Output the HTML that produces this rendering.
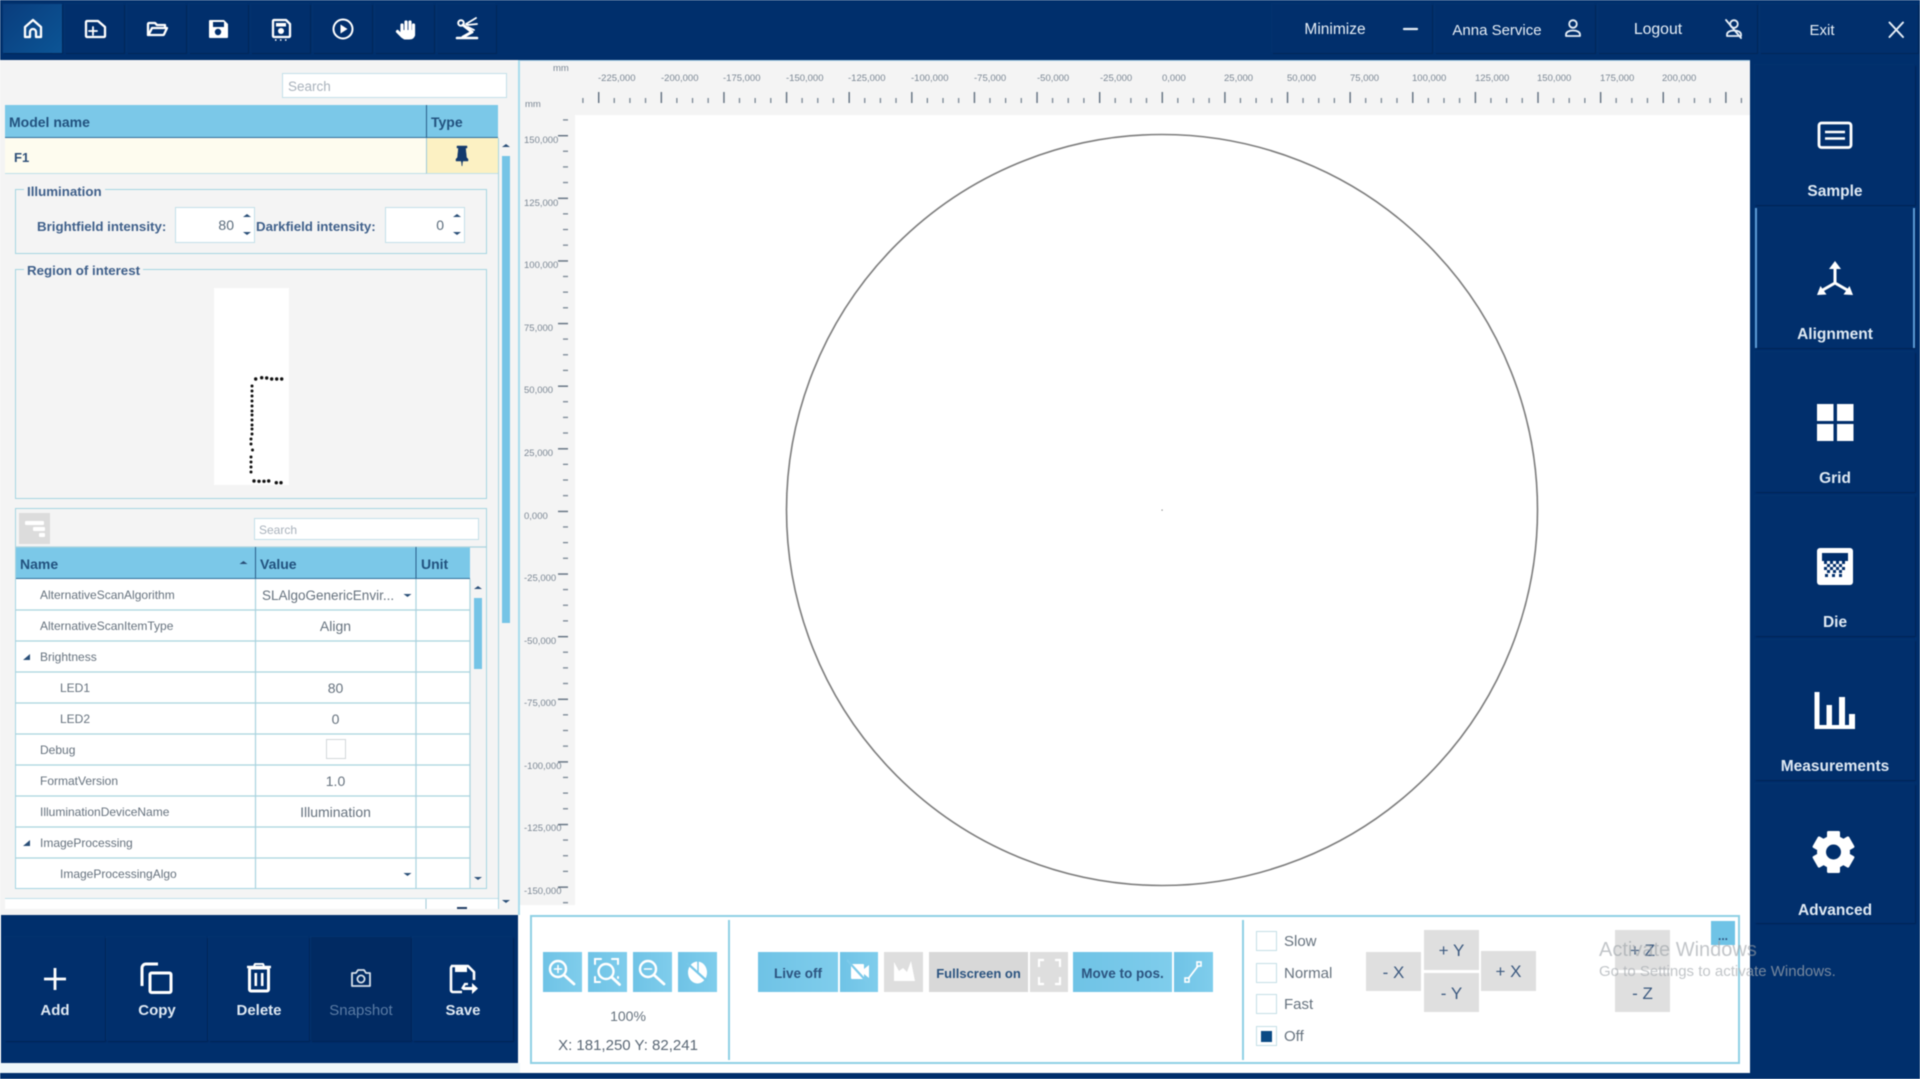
<!DOCTYPE html>
<html><head><meta charset="utf-8"><title>Alignment</title>
<style>
html,body{margin:0;padding:0;width:1920px;height:1079px;overflow:hidden;background:#fff}
#p{position:absolute;left:0;top:0;width:1920px;height:1079px;overflow:hidden;font-family:"Liberation Sans",sans-serif;background:#fff;filter:blur(.45px)}
#p div{position:absolute;box-sizing:border-box}
.t{white-space:nowrap}
.c{display:flex;align-items:center;justify-content:center;white-space:nowrap}
.nav{background:#002f6c}
.tb{background:#012f6c;box-shadow:1px 1px 0 #012658,-1px -1px 0 #03336f;top:4px;height:49px}
.tt{color:#e6eef6;font-size:15px;font-weight:400;height:24px;top:18px}
.sb{background:#012f6c;left:1755px;width:160px;box-shadow:1px 1px 1px #012354,-1px -1px 0 #03336f;color:#dfe9f3;font-size:15.5px;font-weight:700}
.sb span{position:absolute;left:0;width:160px;text-align:center;line-height:20px}
.lb{background:#012f6c;top:937px;height:104px;width:100px;box-shadow:1px 1px 1px #012354,-1px -1px 0 #03336f}
.lbt{top:1000px;height:20px;width:100px;color:#dfe9f3;font-size:15px;font-weight:700}
.r{color:#7b8794;font-size:9.5px;line-height:12px;white-space:nowrap}
.l{color:#7b8794;font-size:9.5px;line-height:12px;left:524px;white-space:nowrap}
.inp{background:#fff;border:1.5px solid #c3e0e8;color:#a9b2bc;font-size:13.5px;padding-left:5px;padding-top:2px;display:flex;align-items:center}
.lg{color:#3e5f8a;font-size:13.3px;font-weight:700;white-space:nowrap;background:#f4f4f4;padding:0 3px;line-height:16px}
.grp{border:1.5px solid #a6d5e2}
.lab{color:#3e5f8a;font-size:13.3px;font-weight:700;white-space:nowrap;line-height:18px}
.num{background:#fff;border:1.5px solid #c3e0e8;color:#5a6b7b;font-size:14px;text-align:right;line-height:35px}
.h{color:#22527f;font-size:14px;font-weight:700;white-space:nowrap;line-height:18px}
.n{color:#66727e;font-size:12px;line-height:33px;white-space:nowrap}
.v{color:#66727e;font-size:14px;left:256px;width:159px;text-align:center;line-height:33px;white-space:nowrap}
.bb{background:linear-gradient(90deg,#6fc3e6,#7fcdec);top:952px;height:40px}
.gb{background:#dedede;top:952px;height:40px}
.bt{color:#2c5480;font-size:13.5px;font-weight:700;padding-top:2px}
.chk{left:1256px;width:21px;height:20px;background:#fff;border:1.5px solid #c4dfe6}
.cl{left:1284px;color:#66727e;font-size:15px;line-height:22px;white-space:nowrap}
.mv{background:#dfdfdf;color:#3c5a80;font-size:17px;width:55px;padding-top:2px}
</style></head><body><div id="p">

<!-- base areas -->
<div class="nav" style="left:0;top:0;width:1920px;height:60px"></div>
<div style="left:0;top:60px;width:519px;height:855px;background:#f4f4f4"></div>
<div style="left:518px;top:60px;width:2px;height:855px;background:#a9dcec"></div>
<div style="left:520px;top:60px;width:1230px;height:55px;background:#f4f4f4;border-top:1px solid #a9cfe6"></div>
<div style="left:520px;top:115px;width:55px;height:790px;background:#f4f4f4"></div>
<div class="nav" style="left:1750px;top:60px;width:170px;height:1019px"></div>
<div class="nav" style="left:0;top:1073px;width:1920px;height:6px"></div>
<div class="nav" style="left:1px;top:915px;width:517px;height:148px"></div>
<div style="left:0;top:1063px;width:520px;height:10px;background:#eef7fa"></div>

<!-- top buttons -->
<div class="tb" style="left:3px;width:59px;background:linear-gradient(135deg,#0a3d7d,#0c5596 100%)"></div>
<div class="tb" style="left:65px;width:59px"></div>
<div class="tb" style="left:127px;width:59px"></div>
<div class="tb" style="left:189px;width:59px"></div>
<div class="tb" style="left:251px;width:59px"></div>
<div class="tb" style="left:313px;width:59px"></div>
<div class="tb" style="left:375px;width:59px"></div>
<div class="tb" style="left:437px;width:59px"></div>
<div class="tb" style="left:1272px;width:160px"></div>
<div class="tb" style="left:1435px;width:160px"></div>
<div class="tb" style="left:1598px;width:159px"></div>
<div class="tb" style="left:1760px;width:158px"></div>
<div class="tt c" style="left:1300px;width:70px;font-size:15.5px">Minimize</div>
<div class="tt c" style="left:1447px;width:100px">Anna Service</div>
<div class="tt c" style="left:1618px;width:80px;font-size:15.8px">Logout</div>
<div class="tt c" style="left:1792px;width:60px">Exit</div>

<!-- right sidebar -->
<div class="sb" style="top:65px;height:140px"><span style="top:117px">Sample</span></div>
<div class="sb" style="top:208px;height:140px;border-left:2px solid #5c9bd6;border-right:2px solid #5c9bd6"><span style="top:117px;left:-2px">Alignment</span></div>
<div class="sb" style="top:352px;height:140px"><span style="top:117px">Grid</span></div>
<div class="sb" style="top:496px;height:140px"><span style="top:117px">Die</span></div>
<div class="sb" style="top:640px;height:140px"><span style="top:117px">Measurements</span></div>
<div class="sb" style="top:784px;height:139px"><span style="top:117px">Advanced</span></div>

<!-- left panel: model table -->
<div class="inp" style="left:282px;top:73px;width:225px;height:25px">Search</div>
<div style="left:5px;top:105px;width:493px;height:33px;background:#7bc8e8;border-bottom:1.5px solid #2f6f9c"></div>
<div style="left:426px;top:105px;width:1px;height:33px;background:#2b5f8c"></div>
<div class="h" style="left:9px;top:113px">Model name</div>
<div class="h" style="left:431px;top:113px">Type</div>
<div style="left:5px;top:138px;width:421px;height:36px;background:#fefcef;border-bottom:1px solid #bfe0e8"></div>
<div style="left:426px;top:138px;width:72px;height:36px;background:#fcf1c3;border-bottom:1px solid #bfe0e8;border-left:1px solid #9fc9d6"></div>
<div class="t" style="left:14px;top:150px;color:#2e4f78;font-size:13px;font-weight:700;line-height:16px">F1</div>

<!-- scrollbar -->
<div style="left:498px;top:138px;width:1px;height:771px;background:#a9d5e2"></div>
<div style="left:502px;top:156px;width:8px;height:467px;background:#75c4e6"></div>

<!-- illumination -->
<div class="grp" style="left:15px;top:189px;width:472px;height:65px"></div>
<div class="lg" style="left:24px;top:184px">Illumination</div>
<div class="lab" style="left:37px;top:218px">Brightfield intensity:</div>
<div class="num" style="left:175px;top:207px;width:80px;height:36px;padding-right:20px">80</div>
<div class="lab" style="left:256px;top:218px">Darkfield intensity:</div>
<div class="num" style="left:385px;top:207px;width:80px;height:36px;padding-right:20px">0</div>

<!-- ROI -->
<div class="grp" style="left:15px;top:269px;width:472px;height:230px"></div>
<div class="lg" style="left:24px;top:263px">Region of interest</div>
<div style="left:214px;top:288px;width:75px;height:197px;background:#fff"></div>

<!-- property grid -->
<div class="grp" style="left:15px;top:508px;width:472px;height:381px"></div>
<div style="left:19px;top:513px;width:31px;height:31px;background:#dcdcdc"></div>
<div class="inp" style="left:254px;top:518px;width:225px;height:22px;font-size:12px;padding-left:4px">Search</div>
<div style="left:16px;top:547px;width:454px;height:32px;background:#7bc8e8;border-bottom:1.5px solid #2f6f9c"></div>
<div style="left:16px;top:579px;width:454px;height:309px;background:#fff"></div>
<div class="h" style="left:20px;top:555px">Name</div>
<div class="h" style="left:260px;top:555px">Value</div>
<div class="h" style="left:421px;top:555px">Unit</div>
<div class="n" style="left:40px;top:579px">AlternativeScanAlgorithm</div>
<div class="n" style="left:40px;top:610px">AlternativeScanItemType</div>
<div class="n" style="left:40px;top:641px">Brightness</div>
<div class="n" style="left:60px;top:672px">LED1</div>
<div class="n" style="left:60px;top:703px">LED2</div>
<div class="n" style="left:40px;top:734px">Debug</div>
<div class="n" style="left:40px;top:765px">FormatVersion</div>
<div class="n" style="left:40px;top:796px">IlluminationDeviceName</div>
<div class="n" style="left:40px;top:827px">ImageProcessing</div>
<div class="n" style="left:60px;top:858px">ImageProcessingAlgo</div>
<div class="t" style="left:262px;top:579px;color:#66727e;font-size:13.5px;line-height:33px">SLAlgoGenericEnvir...</div>
<div class="v" style="top:610px">Align</div>
<div class="v" style="top:672px">80</div>
<div class="v" style="top:703px">0</div>
<div class="v" style="top:765px">1.0</div>
<div class="v" style="top:796px">Illumination</div>
<div style="left:326px;top:739px;width:20px;height:20px;background:#fff;border:1.5px solid #d2d8da"></div>
<div style="left:474px;top:598px;width:8px;height:71px;background:#75c4e6"></div>

<!-- bottom left buttons -->
<div class="lb" style="left:5px"></div>
<div class="lb" style="left:107px"></div>
<div class="lb" style="left:209px"></div>
<div class="lb" style="left:311px;background:#012a62"></div>
<div class="lb" style="left:413px"></div>
<div class="lbt c" style="left:5px">Add</div>
<div class="lbt c" style="left:107px">Copy</div>
<div class="lbt c" style="left:209px">Delete</div>
<div class="lbt c" style="left:311px;color:#5a7ba4;font-weight:400">Snapshot</div>
<div class="lbt c" style="left:413px">Save</div>

<!-- ruler labels top -->
<div class="r" style="left:598px;top:73px">-225,000</div>
<div class="r" style="left:661px;top:73px">-200,000</div>
<div class="r" style="left:723px;top:73px">-175,000</div>
<div class="r" style="left:786px;top:73px">-150,000</div>
<div class="r" style="left:848px;top:73px">-125,000</div>
<div class="r" style="left:911px;top:73px">-100,000</div>
<div class="r" style="left:974px;top:73px">-75,000</div>
<div class="r" style="left:1037px;top:73px">-50,000</div>
<div class="r" style="left:1100px;top:73px">-25,000</div>
<div class="r" style="left:1162px;top:73px">0,000</div>
<div class="r" style="left:1224px;top:73px">25,000</div>
<div class="r" style="left:1287px;top:73px">50,000</div>
<div class="r" style="left:1350px;top:73px">75,000</div>
<div class="r" style="left:1412px;top:73px">100,000</div>
<div class="r" style="left:1475px;top:73px">125,000</div>
<div class="r" style="left:1537px;top:73px">150,000</div>
<div class="r" style="left:1600px;top:73px">175,000</div>
<div class="r" style="left:1662px;top:73px">200,000</div>
<div class="r" style="left:553px;top:63px">mm</div>
<div class="r" style="left:525px;top:99px">mm</div>
<!-- ruler labels left -->
<div class="l" style="top:135px">150,000</div>
<div class="l" style="top:198px">125,000</div>
<div class="l" style="top:260px">100,000</div>
<div class="l" style="top:323px">75,000</div>
<div class="l" style="top:385px">50,000</div>
<div class="l" style="top:448px">25,000</div>
<div class="l" style="top:511px">0,000</div>
<div class="l" style="top:573px">-25,000</div>
<div class="l" style="top:636px">-50,000</div>
<div class="l" style="top:698px">-75,000</div>
<div class="l" style="top:761px">-100,000</div>
<div class="l" style="top:823px">-125,000</div>
<div class="l" style="top:886px">-150,000</div>

<!-- bottom toolbar -->
<div style="left:530px;top:915px;width:1210px;height:149px;border:2px solid #8fd0e4"></div>
<div style="left:728px;top:920px;width:2px;height:140px;background:#8fd0e4"></div>
<div style="left:1242px;top:920px;width:2px;height:140px;background:#8fd0e4"></div>
<div class="bb" style="left:543px;width:39px"></div>
<div class="bb" style="left:588px;width:39px"></div>
<div class="bb" style="left:633px;width:39px"></div>
<div class="bb" style="left:678px;width:39px"></div>
<div class="c" style="left:578px;top:1006px;width:100px;height:20px;color:#66727e;font-size:14px">100%</div>
<div class="c" style="left:548px;top:1035px;width:160px;height:20px;color:#5a6775;font-size:15px">X: 181,250 Y: 82,241</div>
<div class="bb bt c" style="left:758px;width:80px">Live off</div>
<div class="bb" style="left:840px;width:38px"></div>
<div class="gb" style="left:884px;width:39px"></div>
<div class="gb bt c" style="left:929px;width:99px;background:#d8d8d8;font-size:13px">Fullscreen on</div>
<div class="gb" style="left:1030px;width:38px"></div>
<div class="bb bt c" style="left:1073px;width:99px">Move to pos.</div>
<div class="bb" style="left:1174px;width:39px"></div>

<div class="chk" style="top:931px"></div><div class="cl" style="top:931px">Slow</div>
<div class="chk" style="top:963px"></div><div class="cl" style="top:963px">Normal</div>
<div class="chk" style="top:994px"></div><div class="cl" style="top:994px">Fast</div>
<div class="chk" style="top:1026px"></div><div class="cl" style="top:1026px">Off</div>
<div style="left:1261px;top:1031px;width:11px;height:11px;background:#0a4a85"></div>

<div class="mv c" style="left:1366px;top:952px;height:39px">- X</div>
<div class="mv c" style="left:1424px;top:930px;height:40px">+ Y</div>
<div class="mv c" style="left:1424px;top:973px;height:39px">- Y</div>
<div class="mv c" style="left:1481px;top:951px;height:40px">+ X</div>
<div class="mv c" style="left:1615px;top:930px;height:40px">+ Z</div>
<div class="mv c" style="left:1615px;top:973px;height:39px">- Z</div>
<div class="c" style="left:1711px;top:921px;width:24px;height:24px;background:#6fc3e6;color:#2c5480;font-size:12px;font-weight:700;padding-top:6px">...</div>

<!-- drawings -->
<svg style="position:absolute;left:0;top:0" width="1920" height="1079" viewBox="0 0 1920 1079" fill="none">
<defs>
<pattern id="tt" patternUnits="userSpaceOnUse" x="598" y="0" width="62.62" height="1079">
<rect x="0" y="92" width="1.4" height="11" fill="#5f6e7e"/>
<rect x="15.65" y="98" width="1.2" height="5" fill="#6f7d8c"/>
<rect x="31.3" y="98" width="1.2" height="5" fill="#6f7d8c"/>
<rect x="46.95" y="98" width="1.2" height="5" fill="#6f7d8c"/>
</pattern>
<pattern id="lt" patternUnits="userSpaceOnUse" x="0" y="135" width="1920" height="62.62">
<rect x="558" y="0" width="10" height="1.4" fill="#5f6e7e"/>
<rect x="563" y="15.65" width="5" height="1.2" fill="#6f7d8c"/>
<rect x="563" y="31.3" width="5" height="1.2" fill="#6f7d8c"/>
<rect x="563" y="46.95" width="5" height="1.2" fill="#6f7d8c"/>
</pattern>
</defs>
<rect x="581" y="90" width="1163" height="15" fill="url(#tt)"/>
<rect x="556" y="117" width="14" height="787" fill="url(#lt)"/>

<!-- wafer -->
<circle cx="1162" cy="510" r="375.5" stroke="#7d7d7d" stroke-width="1.6"/>
<rect x="1161.5" y="509.5" width="1.2" height="1.2" fill="#888"/>

<!-- top icons -->
<g stroke="#fff" stroke-width="2.3" stroke-linejoin="round" stroke-linecap="round">
<path d="M25 27 33 20 41 27V37H36V32a3 3 0 0 0-6 0V37H25Z"/>
<path d="M87 21h11l7 6v9a1 1 0 0 1-1 1H87a1 1 0 0 1-1-1V22a1 1 0 0 1 1-1Z"/>
<path d="M93 27v8M89 31h8" stroke-width="1.8"/>
<path d="M148 35V24a1 1 0 0 1 1-1h6l2 2h8v3"/>
<path d="M148 35h15a1 1 0 0 0 1-.6L167 28H152L148.5 35Z"/>
<path d="M274 20h12l4 4v12a1 1 0 0 1-1 1H274a1 1 0 0 1-1-1V21a1 1 0 0 1 1-1Z"/>
<circle cx="343" cy="29" r="9.5" stroke-width="2"/>
</g>
<g transform="translate(-1 0)">
<path d="M211 20h14l4 4v13a1 1 0 0 1-1 1H211a1 1 0 0 1-1-1V21a1 1 0 0 1 1-1Z" fill="#fff"/>
<rect x="214" y="22" width="11" height="5" fill="#012f6c"/>
<circle cx="219" cy="32" r="3.2" fill="#012f6c"/>
</g>
<rect x="276" y="23" width="10" height="3.5" fill="#fff"/>
<circle cx="281" cy="31" r="3" fill="#fff"/>
<path d="M275 40h1.5M280 40h1.5M285 40h1.5" stroke="#fff" stroke-width="1.5"/>
<path d="M340.5 24.5v9l7-4.5Z" fill="#fff"/>
<!-- hand -->
<g stroke="#fff" stroke-width="3.2" stroke-linecap="round">
<path d="M402 25v10M406 22v12M410 22v12M413.5 25v10M397.5 31.5l5 5"/>
</g>
<path d="M401 30h14v4c0 4-2.5 5.5-6 5.5h-3.5c-2 0-3-1-4.5-3Z" fill="#fff"/>
<!-- robot -->
<g stroke="#fff" stroke-width="2.6" stroke-linecap="round" stroke-linejoin="round">
<path d="M457 38h20"/>
<path d="M463 37l9-5-9-7" stroke-width="3"/>
<circle cx="461" cy="23" r="2.8" stroke-width="2"/>
<path d="M466 24l10-6M467 25l10-1M468 27l6 3" stroke-width="1.8"/>
</g>

<!-- top right icons -->
<g stroke="#e6eef6" stroke-linecap="round">
<path d="M1404 29h13" stroke-width="2.2"/>
<circle cx="1573" cy="24" r="3.8" stroke-width="1.8"/>
<path d="M1566 36v-1.500c0-2.500 3-4 7-4s7 1.500 7 4V36Z" stroke-width="1.8" stroke-linejoin="round"/>
<circle cx="1734" cy="24" r="3.8" stroke-width="1.8"/>
<path d="M1727 36v-1.500c0-2.500 3-4 7-4s7 1.500 7 4V36Z" stroke-width="1.8" stroke-linejoin="round"/>
<path d="M1726 20l15 18" stroke-width="1.8"/>
<path d="M1889.5 22.5l13.5 14.5M1903 22.500l-13.5 14.5" stroke-width="2"/>
</g>

<!-- sidebar icons -->
<g stroke="#fff" fill="none">
<rect x="1819" y="123" width="32" height="24.5" rx="2.5" stroke-width="2.8"/>
<path d="M1825 132h20M1825 138.500h20" stroke-width="2.4"/>
<path d="M1835 283V266M1835 283l-14 8M1835 283l14 8" stroke-width="3"/>
</g>
<path d="M1835 261l6 8h-12ZM1817 295l3.5-9 6 8.5ZM1853 295l-3.5-9-6 8.5Z" fill="#fff"/>
<g fill="#fff">
<rect x="1817" y="404" width="16.5" height="17"/><rect x="1837" y="404" width="16.5" height="17"/>
<rect x="1817" y="424" width="16.5" height="17"/><rect x="1837" y="424" width="16.5" height="17"/>
<rect x="1817" y="548" width="36" height="37" rx="3"/>
<rect x="1814.5" y="692" width="5" height="37"/><rect x="1814.5" y="725" width="40.5" height="4"/>
<rect x="1826.5" y="705" width="5.500" height="22"/><rect x="1839" y="697" width="6" height="30"/><rect x="1849" y="714" width="6" height="13"/>
</g>
<rect x="1822" y="553" width="26" height="8" fill="#012f6c"/>
<path d="M1824 561h3v3h-3ZM1830 561h3v3h-3ZM1836 561h3v3h-3ZM1842 561h3v3h-3ZM1827 564h3v3h-3ZM1833 564h3v3h-3ZM1839 564h3v3h-3ZM1824 567h3v3h-3ZM1830 567h3v3h-3ZM1836 567h3v3h-3ZM1842 567h3v3h-3ZM1827 570h3v3h-3ZM1833 570h3v3h-3ZM1839 570h3v3h-3ZM1825 574h3v3h-3ZM1832 574h3v3h-3ZM1839 574h3v3h-3Z" fill="#012f6c"/>
<g fill="#fff" transform="translate(1833.5 852)">
<circle r="16.5"/>
<rect x="-6.5" y="-21" width="13" height="10" rx="1.5"/>
<rect x="-6.5" y="-21" width="13" height="10" rx="1.5" transform="rotate(60)"/>
<rect x="-6.5" y="-21" width="13" height="10" rx="1.5" transform="rotate(120)"/>
<rect x="-6.5" y="-21" width="13" height="10" rx="1.5" transform="rotate(180)"/>
<rect x="-6.5" y="-21" width="13" height="10" rx="1.5" transform="rotate(240)"/>
<rect x="-6.5" y="-21" width="13" height="10" rx="1.5" transform="rotate(300)"/>
</g>
<circle cx="1833.5" cy="852" r="7.5" fill="#012f6c"/>

<!-- pin -->
<path d="M457 146h10v2h-1.5l1 9.5 1.500 1.5v2h-12v-2l1.500-1.500 1-9.500H457ZM461.3 161h1.4l-.7 5Z" fill="#143a6c" stroke="#143a6c" stroke-width=".5"/>

<!-- scroll + spin arrows -->
<g fill="#2a4f78">
<path d="M506 144l4 3h-8ZM506 903l4-3h-8Z"/>
<path d="M247 214l4 3h-8ZM247 235l4-3h-8ZM457 214l4 3h-8ZM457 235l4-3h-8Z"/>
<path d="M478 586l4 3h-8ZM478 880l4-3h-8Z"/>
<path d="M243.5 561l4 3h-8Z"/>
<path d="M407.5 597l4-3h-8ZM407.5 876l4-3h-8Z"/>
<path d="M30 654v6h-7ZM30 840v6h-7Z"/>
</g>

<!-- model table bottom -->
<path d="M5 898.5H498" stroke="#bfe0e8"/>
<rect x="5" y="899" width="493" height="10" fill="#fff"/>
<path d="M426 899v10" stroke="#9fc9d6"/>
<rect x="457" y="907" width="10" height="2" fill="#223f66"/>

<!-- grid lines -->
<g stroke="#a9d3de" stroke-width="1.2">
<path d="M16 610H470M16 641H470M16 672H470M16 703H470M16 734H470M16 765H470M16 796H470M16 827H470M16 858H470"/>
<path d="M255.5 579V888M416 579V888M470 579V888"/>
<path d="M16 547H487"/>
</g>
<path d="M255.5 547v32M416 547v32" stroke="#2b5f8c"/>

<!-- filter icon -->
<g fill="#fff">
<rect x="25" y="521" width="19" height="4" rx="1"/><rect x="33" y="527" width="12" height="4" rx="1"/><rect x="39" y="533" width="6" height="4" rx="1"/>
</g>

<!-- ROI dots -->
<g fill="#111">
<circle cx="255.7" cy="379" r="1.7"/><circle cx="261.7" cy="377.7" r="1.7"/><circle cx="266.7" cy="378" r="1.7"/><circle cx="271.7" cy="379" r="1.7"/><circle cx="276.7" cy="379" r="1.7"/><circle cx="281.7" cy="379" r="1.7"/>
<circle cx="252" cy="386" r="1.5"/><circle cx="252" cy="391" r="1.5"/><circle cx="252" cy="396" r="1.5"/><circle cx="252" cy="401" r="1.5"/><circle cx="252" cy="406" r="1.5"/><circle cx="252" cy="411" r="1.5"/><circle cx="252" cy="415" r="1.5"/><circle cx="252" cy="420" r="1.5"/><circle cx="252" cy="425" r="1.5"/><circle cx="252" cy="429" r="1.5"/><circle cx="252" cy="434" r="1.5"/><circle cx="251" cy="439" r="1.5"/><circle cx="251" cy="444" r="1.5"/><circle cx="252.5" cy="450" r="1.5"/><circle cx="251" cy="457" r="1.5"/><circle cx="251" cy="462" r="1.5"/><circle cx="251" cy="467" r="1.5"/><circle cx="251" cy="472" r="1.5"/>
<circle cx="254" cy="481" r="1.7"/><circle cx="259" cy="481.3" r="1.7"/><circle cx="264" cy="481.3" r="1.7"/><circle cx="268.7" cy="481" r="1.7"/><circle cx="276.3" cy="482.7" r="1.7"/><circle cx="281" cy="482.7" r="1.7"/>
</g>

<!-- bottom left icons -->
<g stroke="#fff" stroke-width="3" stroke-linejoin="round">
<path d="M44 979H66M55 968V990" stroke-width="2.8"/>
<path d="M158 964H146a4 4 0 0 0-4 4V986"/>
<rect x="150" y="973" width="21" height="19.5" rx="1.5"/>
<path d="M247 967H271" stroke-width="2.5"/>
<path d="M254 966l1-2h8l1 2" stroke-width="2"/>
<rect x="249.5" y="968" width="19" height="23" rx="1.5"/>
<path d="M255.8 973V986M262.2 973V986" stroke-width="2.6"/>
<path d="M451 966h17l6 6v8M462 992H453a2 2 0 0 1-2-2V968a2 2 0 0 1 2-2" stroke-width="2.6"/>
</g>
<rect x="455" y="966" width="12" height="6" fill="#fff"/>
<path d="M462 989l3-5h3" stroke="#fff" stroke-width="2.2"/>
<path d="M463 987h9v-4l6 5.500-6 5.500v-4h-9Z" fill="#fff"/>
<g stroke="#d7e0ea" stroke-width="1.8" stroke-linejoin="round">
<path d="M352 973h4l2-3h6l2 3h4v13h-18Z"/>
<circle cx="361" cy="979" r="3.6"/>
</g>

<!-- toolbar icons -->
<g stroke="#fff" stroke-width="2.4" stroke-linecap="round">
<circle cx="558" cy="969" r="8"/><path d="M564 975l10 9" stroke-width="2.8"/><path d="M558 965.500v7M554.500 969h7" stroke-width="1.5"/>
<circle cx="606" cy="971.500" r="7.500"/><path d="M611.500 977l8 7.500" stroke-width="2.8"/>
<path d="M595 964v-5h6M612 959h6v5M595 977v5h5M618 977v1" stroke-width="2"/>
<circle cx="648" cy="969" r="8"/><path d="M654 975l10 9" stroke-width="2.8"/><path d="M644.500 969h7" stroke-width="1.5"/>
</g>
<ellipse cx="697.500" cy="972.500" rx="9.500" ry="11" fill="#fff"/>
<path d="M687 963l20 18" stroke="#76c7e8" stroke-width="2.200"/>
<path d="M698 961v11" stroke="#76c7e8" stroke-width="1.500"/>
<rect x="851" y="964" width="13" height="15" rx="1" fill="#fff"/>
<path d="M864 969l5-4v13l-5-4Z" fill="#fff"/>
<path d="M847 960l21 23" stroke="#7ccaea" stroke-width="2.200"/>
<path d="M894 981V962L899 971L903 968L907 972L911 961L915 981Z" fill="#fff"/>
<g stroke="#fff" stroke-width="2.2">
<path d="M1039 967v-7h5M1055 960h5v7M1039 977v7h5M1060 977v7h-5"/>
<path d="M1188 979l10-13" stroke-width="1.8"/>
<rect x="1185" y="978" width="4" height="4" stroke-width="1.6"/>
<rect x="1197" y="962" width="4" height="4" stroke-width="1.6"/>
</g>
</svg>

<!-- watermark on top -->
<div class="t" style="left:1599px;top:938px;color:#9aa0a6;opacity:.6;font-size:20px;line-height:24px">Activate Windows</div>
<div class="t" style="left:1599px;top:963px;color:#a8adb2;opacity:.7;font-size:15px;line-height:18px">Go to Settings to activate Windows.</div>
</div></body></html>
